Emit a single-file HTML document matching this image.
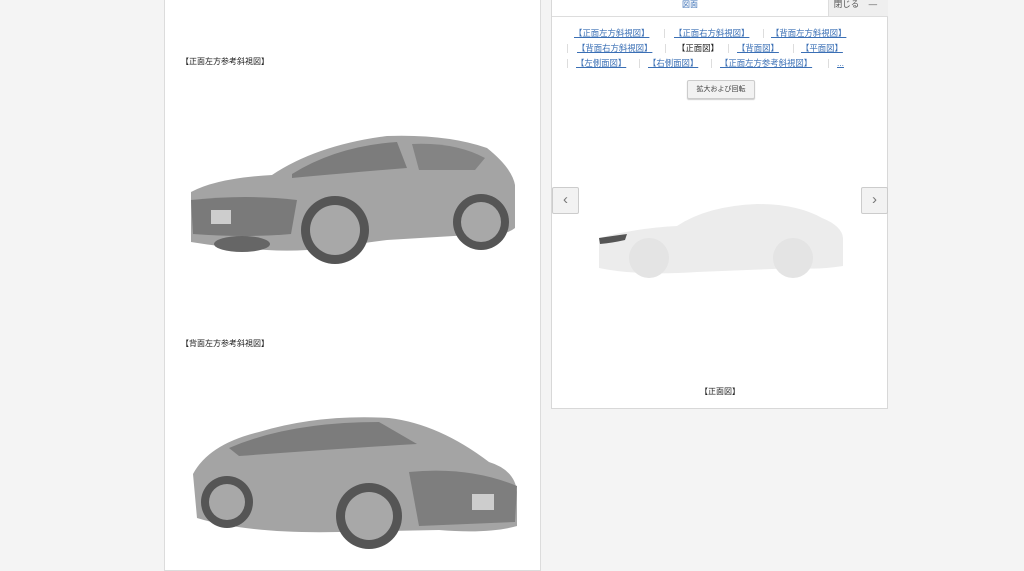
<!DOCTYPE html>
<html><head><meta charset="utf-8"><style>
body{margin:0;width:1024px;height:567px;background:#f4f4f4;position:relative;overflow:hidden;font-family:"Liberation Sans","Noto Sans CJK JP",sans-serif}
.lp{position:absolute;left:164px;top:-1px;width:375px;height:570px;background:#fff;border:1px solid #dcdcdc}
.cap{position:absolute;font-size:8px;color:#222}
.rp{position:absolute;left:551px;top:-1px;width:335px;height:408px;background:#fff;border:1px solid #d8d8d8}
.tab{position:absolute;left:0;top:0;width:276px;height:16px;border-bottom:1px solid #ddd;text-align:center;font-size:8px;color:#3a6fb5;line-height:9px}
.close{position:absolute;left:276px;top:0;width:59px;height:16px;background:#efefef;border-left:1px solid #ddd;border-bottom:1px solid #ddd;font-size:8.5px;color:#555;line-height:9px}
.l{position:absolute;font-size:8.4px;color:#3a6fb5;text-decoration:underline;white-space:nowrap;line-height:10px}
.s{position:absolute;width:1px;height:9px;background:#ddd}
.btn{position:absolute;left:135px;top:80px;width:66px;height:17px;background:#f2f2f2;border:1px solid #ccc;border-radius:2px;font-size:7px;color:#444;text-align:center;line-height:17px;box-shadow:0 1px 1px #ccc}
.arr{position:absolute;top:187px;width:25px;height:25px;background:#f2f2f2;border:1px solid #ccc;border-radius:2px;color:#777;font-size:15px;text-align:center;line-height:23px}
</style></head><body>
<div class="lp">
<div class="cap" style="left:16px;top:56px">【正面左方参考斜視図】</div>
<svg style="position:absolute;left:22px;top:130px" width="335" height="140" viewBox="0 0 335 140">
<path d="M4 62 Q30 48 85 45 Q130 15 200 6 Q260 4 300 18 Q325 38 328 55 L328 98 Q318 106 300 104 L200 110 L140 118 Q110 122 80 120 Q40 118 4 112 Z" fill="#a4a4a4"/>
<path d="M105 44 Q150 16 210 12 L220 38 Q170 42 105 48Z" fill="#7c7c7c"/>
<path d="M225 14 Q268 12 298 28 L288 40 L232 40 Z" fill="#848484"/>
<path d="M4 70 Q60 64 110 70 L104 104 Q60 108 6 104 Z" fill="#7a7a7a"/>
<rect x="24" y="80" width="20" height="14" fill="#cdcdcd"/>
<circle cx="148" cy="100" r="34" fill="#555"/><circle cx="148" cy="100" r="25" fill="#a8a8a8"/>
<circle cx="294" cy="92" r="28" fill="#555"/><circle cx="294" cy="92" r="20" fill="#a8a8a8"/>
<ellipse cx="55" cy="114" rx="28" ry="8" fill="#666"/>
</svg>
<div class="cap" style="left:16px;top:338px">【背面左方参考斜視図】</div>
<svg style="position:absolute;left:24px;top:414px" width="335" height="138" viewBox="0 0 335 138">
<path d="M4 60 Q20 30 70 18 Q130 0 200 4 Q250 10 300 48 Q326 56 328 78 L328 112 Q300 120 250 116 L150 118 Q60 120 8 104 Z" fill="#a4a4a4"/>
<path d="M40 34 Q100 8 190 8 L228 30 Q160 34 50 42Z" fill="#7c7c7c"/>
<path d="M220 58 Q280 52 328 72 L326 108 L230 112 Z" fill="#7e7e7e"/>
<rect x="283" y="80" width="22" height="16" fill="#cdcdcd"/>
<circle cx="38" cy="88" r="26" fill="#555"/><circle cx="38" cy="88" r="18" fill="#a8a8a8"/>
<circle cx="180" cy="102" r="33" fill="#555"/><circle cx="180" cy="102" r="24" fill="#a8a8a8"/>
</svg>
</div>
<div class="rp">
<div class="tab">図面</div>
<div class="close">&nbsp; 閉じる &nbsp;&nbsp; —</div>
<span class="l" style="left:22px;top:28px">【正面左方斜視図】</span><span class="s" style="left:112px;top:29px"></span>
<span class="l" style="left:122px;top:28px">【正面右方斜視図】</span><span class="s" style="left:211px;top:29px"></span>
<span class="l" style="left:219px;top:28px">【背面左方斜視図】</span>
<span class="s" style="left:15px;top:44px"></span>
<span class="l" style="left:25px;top:43px">【背面右方斜視図】</span><span class="s" style="left:113px;top:44px"></span>
<span class="l" style="left:125px;top:43px;color:#222;text-decoration:none">【正面図】</span><span class="s" style="left:176px;top:44px"></span>
<span class="l" style="left:185px;top:43px">【背面図】</span><span class="s" style="left:241px;top:44px"></span>
<span class="l" style="left:249px;top:43px">【平面図】</span>
<span class="s" style="left:15px;top:59px"></span>
<span class="l" style="left:24px;top:58px">【左側面図】</span><span class="s" style="left:87px;top:59px"></span>
<span class="l" style="left:96px;top:58px">【右側面図】</span><span class="s" style="left:159px;top:59px"></span>
<span class="l" style="left:168px;top:58px">【正面左方参考斜視図】</span><span class="s" style="left:276px;top:59px"></span>
<span class="l" style="left:285px;top:58px">...</span>
<div class="btn">拡大および回転</div>
<div class="arr" style="left:0">‹</div>
<div class="arr" style="left:309px">›</div>
<svg style="position:absolute;left:45px;top:198px" width="250" height="85" viewBox="0 0 250 85">
<path d="M2 40 Q40 30 80 28 Q110 8 160 6 Q200 6 225 20 Q245 28 246 40 L246 68 Q220 72 200 70 L100 74 Q40 78 2 70 Z" fill="#ececec"/>
<path d="M2 40 Q15 38 30 36 L28 42 Q15 45 3 46Z" fill="#555"/>
<circle cx="52" cy="60" r="20" fill="#e4e4e4"/><circle cx="196" cy="60" r="20" fill="#e4e4e4"/>
</svg>
<div class="cap" style="left:148px;top:386px">【正面図】</div>
</div>
</body></html>
